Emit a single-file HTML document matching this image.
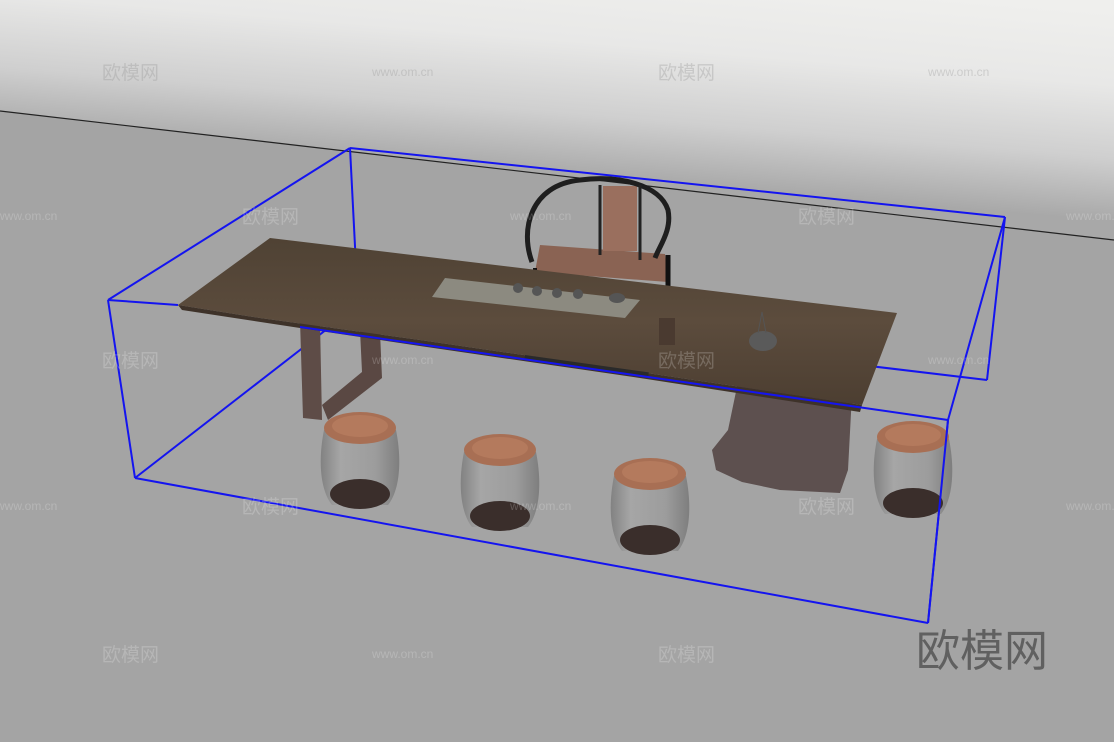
<!DOCTYPE html>
<html><head><meta charset="utf-8"><style>
html,body{margin:0;padding:0;width:1114px;height:742px;overflow:hidden;background:#a4a4a4}
svg{display:block}
.wm{font-family:"Liberation Sans","Noto Sans CJK SC",sans-serif;fill:#fff;fill-opacity:.2;font-size:19px}
.ws{font-family:"Liberation Sans",sans-serif;fill:#fff;fill-opacity:.2;font-size:12px}
</style></head><body>
<svg width="1114" height="742" viewBox="0 0 1114 742" xmlns="http://www.w3.org/2000/svg">
<defs>
<linearGradient id="sky" gradientUnits="userSpaceOnUse" x1="600" y1="-30" x2="583" y2="178">
<stop offset="0" stop-color="#efefed"/><stop offset="0.35" stop-color="#e8e8e7"/><stop offset="0.7" stop-color="#cfcfcf"/><stop offset="1" stop-color="#a8a8a8"/>
</linearGradient>
<linearGradient id="drum" x1="0" y1="0" x2="1" y2="0">
<stop offset="0" stop-color="#808080"/><stop offset="0.25" stop-color="#a6a6a6"/><stop offset="0.7" stop-color="#9c9c9c"/><stop offset="1" stop-color="#7c7c7c"/>
</linearGradient>
<linearGradient id="wood" x1="0" y1="0" x2="0" y2="1">
<stop offset="0" stop-color="#4f4234"/><stop offset="0.5" stop-color="#5c4c3d"/><stop offset="1" stop-color="#4c3e31"/>
</linearGradient>
</defs>
<rect width="1114" height="742" fill="#a4a4a4"/>
<polygon points="0,0 1114,0 1114,240 0,111" fill="url(#sky)"/>
<line x1="0" y1="111" x2="1114" y2="240" stroke="#222" stroke-width="1.2"/>

<g stroke="#1414f0" stroke-width="2" fill="none">
<line x1="350" y1="148" x2="1005" y2="217"/>
<line x1="350" y1="148" x2="108" y2="300"/>
<line x1="350" y1="148" x2="358" y2="305"/>
<line x1="135" y1="478" x2="358" y2="305"/>
<line x1="358" y1="305" x2="987" y2="380"/>
<line x1="1005" y1="217" x2="987" y2="380"/>
</g>

<g>
<polygon points="540,245 665,254 668,282 535,272" fill="#8a6353"/>
<rect x="603" y="186" width="34" height="65" fill="#9a6f5e"/>
<path d="M532,262 C520,230 530,185 580,180 C620,175 660,185 668,210 C672,230 660,245 655,258" stroke="#1e1e1e" stroke-width="5" fill="none"/>
<line x1="600" y1="185" x2="600" y2="255" stroke="#222" stroke-width="3"/>
<line x1="640" y1="185" x2="640" y2="260" stroke="#222" stroke-width="3"/>
<line x1="668" y1="255" x2="668" y2="290" stroke="#111" stroke-width="5"/>
<line x1="535" y1="268" x2="535" y2="280" stroke="#111" stroke-width="4"/>
</g>

<polygon points="300,320 320,322 322,420 303,418" fill="#5e4c47"/>
<polygon points="360,330 380,332 382,378 328,420 322,405 362,372" fill="#5a4843"/>

<path d="M738,382 L852,394 L848,470 L840,493 L780,490 L742,482 L716,470 L712,450 L728,430 Z" fill="#5d504f"/>

<polygon points="270,238 897,313 862,405 640,372 420,340 260,318 178,305" fill="url(#wood)"/>
<polygon points="178,305 260,318 420,340 640,372 862,405 860,412 640,378 420,346 300,328 182,310" fill="#3e3229"/>
<polygon points="445,278 640,300 625,318 432,297" fill="#8c8a80"/>
<rect x="525" y="355" width="125" height="5" fill="#2a2a2a" transform="rotate(8 525 355)"/>
<g fill="#555">
<circle cx="518" cy="288" r="5"/><circle cx="537" cy="291" r="5"/><circle cx="557" cy="293" r="5"/><circle cx="578" cy="294" r="5"/>
<ellipse cx="617" cy="298" rx="8" ry="5"/>
</g>
<rect x="659" y="318" width="16" height="27" fill="#4a3a30"/>
<ellipse cx="763" cy="341" rx="14" ry="10" fill="#5a5a5a"/>
<path d="M758,333 L762,312 L766,333" stroke="#555" fill="none"/>

<g stroke="#1414f0" stroke-width="2" fill="none">
<line x1="108" y1="300" x2="178" y2="305"/>
<line x1="300" y1="327" x2="948" y2="420"/>
<line x1="108" y1="300" x2="135" y2="478"/>
<line x1="135" y1="478" x2="928" y2="623"/>
<line x1="1005" y1="217" x2="948" y2="420"/>
<line x1="948" y1="420" x2="928" y2="623"/>
</g>

<g>
<g transform="translate(360,0)">
<path d="M-36,430 C-42,460 -40,490 -28,505 L28,505 C40,490 42,460 36,430 Z" fill="url(#drum)" opacity=".95"/>
<ellipse cx="0" cy="494" rx="30" ry="15" fill="#3a2e2b"/>
<ellipse cx="0" cy="428" rx="36" ry="16" fill="#a86f54"/>
<ellipse cx="0" cy="426" rx="28" ry="11" fill="#b47a5d"/>
</g>
<g transform="translate(500,22)">
<path d="M-36,430 C-42,460 -40,490 -28,505 L28,505 C40,490 42,460 36,430 Z" fill="url(#drum)" opacity=".95"/>
<ellipse cx="0" cy="494" rx="30" ry="15" fill="#3a2e2b"/>
<ellipse cx="0" cy="428" rx="36" ry="16" fill="#a86f54"/>
<ellipse cx="0" cy="426" rx="28" ry="11" fill="#b47a5d"/>
</g>
<g transform="translate(650,46)">
<path d="M-36,430 C-42,460 -40,490 -28,505 L28,505 C40,490 42,460 36,430 Z" fill="url(#drum)" opacity=".95"/>
<ellipse cx="0" cy="494" rx="30" ry="15" fill="#3a2e2b"/>
<ellipse cx="0" cy="428" rx="36" ry="16" fill="#a86f54"/>
<ellipse cx="0" cy="426" rx="28" ry="11" fill="#b47a5d"/>
</g>
<g transform="translate(913,9)">
<path d="M-36,430 C-42,460 -40,490 -28,505 L28,505 C40,490 42,460 36,430 Z" fill="url(#drum)" opacity=".95"/>
<ellipse cx="0" cy="494" rx="30" ry="15" fill="#3a2e2b"/>
<ellipse cx="0" cy="428" rx="36" ry="16" fill="#a86f54"/>
<ellipse cx="0" cy="426" rx="28" ry="11" fill="#b47a5d"/>
</g>
</g>
<line x1="948" y1="420" x2="928" y2="623" stroke="#1414f0" stroke-width="2"/>

<text class="wm" x="102" y="79" style="fill:#999;fill-opacity:.35">欧模网</text><text class="ws" x="372" y="76" style="fill:#999;fill-opacity:.35">www.om.cn</text>
<text class="wm" x="658" y="79" style="fill:#999;fill-opacity:.35">欧模网</text><text class="ws" x="928" y="76" style="fill:#999;fill-opacity:.35">www.om.cn</text>
<text class="ws" x="-4" y="220">www.om.cn</text><text class="wm" x="242" y="223">欧模网</text>
<text class="ws" x="510" y="220">www.om.cn</text><text class="wm" x="798" y="223">欧模网</text><text class="ws" x="1066" y="220">www.om.cn</text>
<text class="wm" x="102" y="367">欧模网</text><text class="ws" x="372" y="364">www.om.cn</text>
<text class="wm" x="658" y="367">欧模网</text><text class="ws" x="928" y="364">www.om.cn</text>
<text class="ws" x="-4" y="510">www.om.cn</text><text class="wm" x="242" y="513">欧模网</text>
<text class="ws" x="510" y="510">www.om.cn</text><text class="wm" x="798" y="513">欧模网</text><text class="ws" x="1066" y="510">www.om.cn</text>
<text class="wm" x="102" y="661">欧模网</text><text class="ws" x="372" y="658">www.om.cn</text>
<text class="wm" x="658" y="661">欧模网</text>
<text x="916" y="666" font-family="'Noto Sans CJK SC',sans-serif" font-size="44" fill="#555" fill-opacity=".85">欧模网</text>
</svg>
</body></html>
